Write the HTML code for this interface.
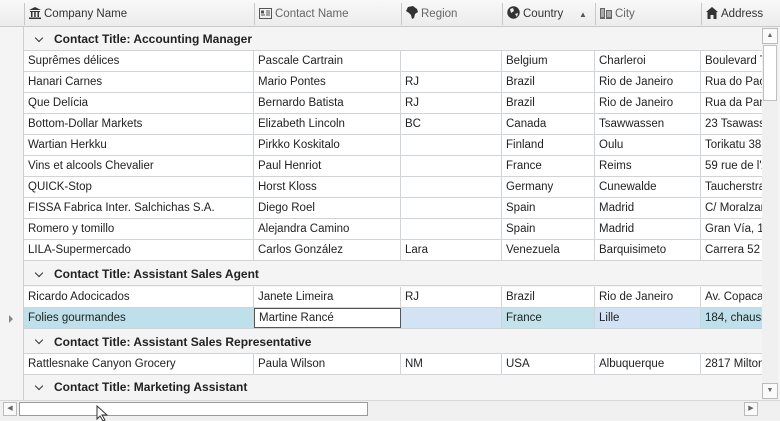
<!DOCTYPE html><html><head><style>
*{margin:0;padding:0;box-sizing:border-box}
body{width:780px;height:420px;overflow:hidden;background:#f4f4f4;font-family:"Liberation Sans",sans-serif;font-size:11.5px;color:#222;position:relative}
.a{position:absolute}
.hdr{top:0;height:27px;left:0;width:780px;background:linear-gradient(#f8f8f8,#ececec);border-bottom:1px solid #c9c9c9}
.hc{position:absolute;top:3px;height:22px;border-left:1px solid #c8c8c8;line-height:23px;padding-left:4px;white-space:nowrap;color:#333}
.hc.g{color:#666}
.row{position:absolute;left:24px;width:738px;height:21px;border-bottom:1px solid #cfd3da;background:#fff}
.c{position:absolute;top:0;height:20px;line-height:21px;padding-left:4px;border-right:1px solid #cfd3da;white-space:nowrap;overflow:hidden}
.grp{position:absolute;left:24px;width:738px;background:#f4f4f4;border-bottom:1px solid #cfd3da;font-weight:bold;font-size:12px;padding-left:30px;color:#222}
.grp:before{content:"";position:absolute;left:12px;top:50%;margin-top:-4px;width:5px;height:5px;border-right:1.5px solid #333;border-bottom:1.5px solid #333;transform:rotate(45deg)}
svg{vertical-align:-2px;margin-right:3px}
</style></head><body>
<div class="a hdr">
<div class="hc" style="left:24px;width:230px"><svg width="12" height="12" viewBox="0 0 12 12"><path d="M6 0L12 3H0Z M1 4h10v1H1z M2 5h1.5v5H2z M5.2 5h1.5v5H5.2z M8.5 5H10v5H8.5z M0 10.5h12V12H0z" fill="#333"/></svg>Company Name</div>
<div class="hc g" style="left:254px;width:147px"><svg width="13" height="11" viewBox="0 0 13 11"><rect x="0.5" y="0.5" width="12" height="10" fill="none" stroke="#555"/><rect x="2" y="2.5" width="3" height="3" fill="#555"/><path d="M2 7h4M7 3h4M7 5h4M7 7h4" stroke="#555"/></svg>Contact Name</div>
<div class="hc g" style="left:401px;width:101px"><svg width="12" height="13" viewBox="0 0 12 13"><path d="M2 1L7 0L11 3L12 6L9 8L8 12L6 13L5 9L3 7L0 5Z" fill="#333"/></svg>Region</div>
<div class="hc" style="left:502px;width:93px"><svg width="13" height="13" viewBox="0 0 13 13"><circle cx="6.5" cy="6.5" r="6.2" fill="#333"/><path d="M3 3L6 2L7 5L4 7Z M8 8L11 7L10 11Z" fill="#eee"/></svg>Country<span style="position:absolute;left:76px;top:0;font-size:8px;color:#555">▲</span></div>
<div class="hc g" style="left:595px;width:106px"><svg width="12" height="12" viewBox="0 0 12 12"><path d="M0 1h5v11H0z M6 3h6v9H6z" fill="#666"/><path d="M1 3h3M1 5h3M1 7h3M1 9h3M7 5h4M7 7h4M7 9h4" stroke="#eee"/></svg>City</div>
<div class="hc" style="left:701px;width:79px"><svg width="12" height="12" viewBox="0 0 12 12"><path d="M6 0L12 5H0Z M1.5 5h9v7h-3V8h-3v4h-3z" fill="#333"/></svg>Address</div>
</div>
<div class="a" style="left:0;top:27px;width:24px;height:373px;background:#f4f4f4;border-right:1px solid #d0d0d0"></div>

<div class="grp" style="top:27px;height:24px;line-height:25px">Contact Title: Accounting Manager</div>
<div class="grp" style="top:262px;height:24px;line-height:25px">Contact Title: Assistant Sales Agent</div>
<div class="grp" style="top:329px;height:25px;line-height:26px">Contact Title: Assistant Sales Representative</div>
<div class="grp" style="top:375px;height:24px;line-height:25px;border-bottom:none">Contact Title: Marketing Assistant</div>

<div class="row" style="top:51px"><div class="c" style="left:0;width:230px">Suprêmes délices</div><div class="c" style="left:230px;width:147px">Pascale Cartrain</div><div class="c" style="left:377px;width:101px"></div><div class="c" style="left:478px;width:93px">Belgium</div><div class="c" style="left:571px;width:106px">Charleroi</div><div class="c" style="left:677px;width:61px;border:none">Boulevard Tirou</div></div>
<div class="row" style="top:72px"><div class="c" style="left:0;width:230px">Hanari Carnes</div><div class="c" style="left:230px;width:147px">Mario Pontes</div><div class="c" style="left:377px;width:101px">RJ</div><div class="c" style="left:478px;width:93px">Brazil</div><div class="c" style="left:571px;width:106px">Rio de Janeiro</div><div class="c" style="left:677px;width:61px;border:none">Rua do Paço</div></div>
<div class="row" style="top:93px"><div class="c" style="left:0;width:230px">Que Delícia</div><div class="c" style="left:230px;width:147px">Bernardo Batista</div><div class="c" style="left:377px;width:101px">RJ</div><div class="c" style="left:478px;width:93px">Brazil</div><div class="c" style="left:571px;width:106px">Rio de Janeiro</div><div class="c" style="left:677px;width:61px;border:none">Rua da Panificadora</div></div>
<div class="row" style="top:114px"><div class="c" style="left:0;width:230px">Bottom-Dollar Markets</div><div class="c" style="left:230px;width:147px">Elizabeth Lincoln</div><div class="c" style="left:377px;width:101px">BC</div><div class="c" style="left:478px;width:93px">Canada</div><div class="c" style="left:571px;width:106px">Tsawwassen</div><div class="c" style="left:677px;width:61px;border:none">23 Tsawassen</div></div>
<div class="row" style="top:135px"><div class="c" style="left:0;width:230px">Wartian Herkku</div><div class="c" style="left:230px;width:147px">Pirkko Koskitalo</div><div class="c" style="left:377px;width:101px"></div><div class="c" style="left:478px;width:93px">Finland</div><div class="c" style="left:571px;width:106px">Oulu</div><div class="c" style="left:677px;width:61px;border:none">Torikatu 38</div></div>
<div class="row" style="top:156px"><div class="c" style="left:0;width:230px">Vins et alcools Chevalier</div><div class="c" style="left:230px;width:147px">Paul Henriot</div><div class="c" style="left:377px;width:101px"></div><div class="c" style="left:478px;width:93px">France</div><div class="c" style="left:571px;width:106px">Reims</div><div class="c" style="left:677px;width:61px;border:none">59 rue de l'Abbaye</div></div>
<div class="row" style="top:177px"><div class="c" style="left:0;width:230px">QUICK-Stop</div><div class="c" style="left:230px;width:147px">Horst Kloss</div><div class="c" style="left:377px;width:101px"></div><div class="c" style="left:478px;width:93px">Germany</div><div class="c" style="left:571px;width:106px">Cunewalde</div><div class="c" style="left:677px;width:61px;border:none">Taucherstraße</div></div>
<div class="row" style="top:198px"><div class="c" style="left:0;width:230px">FISSA Fabrica Inter. Salchichas S.A.</div><div class="c" style="left:230px;width:147px">Diego Roel</div><div class="c" style="left:377px;width:101px"></div><div class="c" style="left:478px;width:93px">Spain</div><div class="c" style="left:571px;width:106px">Madrid</div><div class="c" style="left:677px;width:61px;border:none">C/ Moralzarzal</div></div>
<div class="row" style="top:219px"><div class="c" style="left:0;width:230px">Romero y tomillo</div><div class="c" style="left:230px;width:147px">Alejandra Camino</div><div class="c" style="left:377px;width:101px"></div><div class="c" style="left:478px;width:93px">Spain</div><div class="c" style="left:571px;width:106px">Madrid</div><div class="c" style="left:677px;width:61px;border:none">Gran Vía, 1</div></div>
<div class="row" style="top:240px"><div class="c" style="left:0;width:230px">LILA-Supermercado</div><div class="c" style="left:230px;width:147px">Carlos González</div><div class="c" style="left:377px;width:101px">Lara</div><div class="c" style="left:478px;width:93px">Venezuela</div><div class="c" style="left:571px;width:106px">Barquisimeto</div><div class="c" style="left:677px;width:61px;border:none">Carrera 52 con</div></div>

<div class="row" style="top:287px"><div class="c" style="left:0;width:230px">Ricardo Adocicados</div><div class="c" style="left:230px;width:147px">Janete Limeira</div><div class="c" style="left:377px;width:101px">RJ</div><div class="c" style="left:478px;width:93px">Brazil</div><div class="c" style="left:571px;width:106px">Rio de Janeiro</div><div class="c" style="left:677px;width:61px;border:none">Av. Copacabana</div></div>
<div class="row" style="top:308px"><div class="c" style="left:0;width:230px;background:#bde0ea">Folies gourmandes</div><div class="c" style="left:230px;width:147px;border:1px solid #555;background:#fff;line-height:19px">Martine Rancé</div><div class="c" style="left:377px;width:101px;background:#d2e3f3"></div><div class="c" style="left:478px;width:93px;background:#c3e2ea">France</div><div class="c" style="left:571px;width:106px;background:#d0e2f3">Lille</div><div class="c" style="left:677px;width:61px;border:none;background:#bde0ea">184, chaussée</div></div>
<div class="a" style="left:9px;top:315px;width:0;height:0;border-left:4px solid #888;border-top:4px solid transparent;border-bottom:4px solid transparent"></div>
<div class="row" style="top:354px"><div class="c" style="left:0;width:230px">Rattlesnake Canyon Grocery</div><div class="c" style="left:230px;width:147px">Paula Wilson</div><div class="c" style="left:377px;width:101px">NM</div><div class="c" style="left:478px;width:93px">USA</div><div class="c" style="left:571px;width:106px">Albuquerque</div><div class="c" style="left:677px;width:61px;border:none">2817 Milton Dr.</div></div>

<div class="a" style="left:762px;top:27px;width:16px;height:373px;background:#f0f0f0"></div>
<div class="a" style="left:762px;top:28px;width:16px;height:16px;border:1px solid #bbb;background:#fafafa;font-size:7px;text-align:center;line-height:14px;color:#666">▲</div>
<div class="a" style="left:763px;top:45px;width:14px;height:56px;border:1px solid #c0c0c0;background:#fff"></div>
<div class="a" style="left:762px;top:383px;width:16px;height:16px;border:1px solid #bbb;background:#fafafa;font-size:7px;text-align:center;line-height:14px;color:#666">▼</div>
<div class="a" style="left:0;top:400px;width:780px;height:20px;background:#f0f0f0;border-top:1px solid #d8d8d8"></div>
<div class="a" style="left:3px;top:402px;width:14px;height:14px;border:1px solid #bbb;background:#fafafa;font-size:7px;text-align:center;line-height:12px;color:#666">◀</div>
<div class="a" style="left:19px;top:402px;width:349px;height:14px;border:1px solid #999;background:#fff"></div>
<div class="a" style="left:744px;top:402px;width:14px;height:14px;border:1px solid #bbb;background:#fafafa;font-size:7px;text-align:center;line-height:12px;color:#666">▶</div>
<svg class="a" style="left:96px;top:405px" width="14" height="16" viewBox="0 0 14 16"><path d="M1 1V14L4 11L7 16L9 15L6 10H11Z" fill="#fff" stroke="#333"/></svg>
</body></html>
